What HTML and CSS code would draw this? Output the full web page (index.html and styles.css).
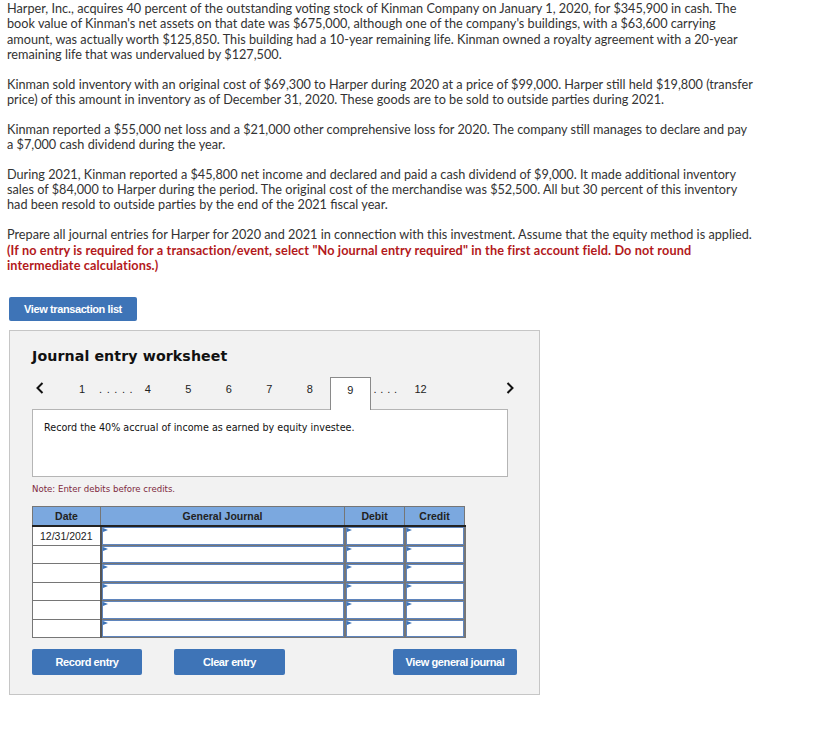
FILE: index.html
```html
<!DOCTYPE html>
<html>
<head>
<meta charset="utf-8">
<link rel="stylesheet" href="styles.css">
</head>
<body>
<div class="question">
  <p>Harper, Inc., acquires 40 percent of the outstanding voting stock of Kinman Company on January 1, 2020, for $345,900 in cash. The book value of Kinman's net assets on that date was $675,000, although one of the company's buildings, with a $63,600 carrying amount, was actually worth $125,850. This building had a 10-year remaining life. Kinman owned a royalty agreement with a 20-year remaining life that was undervalued by $127,500.</p>
  <p>Kinman sold inventory with an original cost of $69,300 to Harper during 2020 at a price of $99,000. Harper still held $19,800 (transfer price) of this amount in inventory as of December 31, 2020. These goods are to be sold to outside parties during 2021.</p>
  <p>Kinman reported a $55,000 net loss and a $21,000 other comprehensive loss for 2020. The company still manages to declare and pay a $7,000 cash dividend during the year.</p>
  <p>During 2021, Kinman reported a $45,800 net income and declared and paid a cash dividend of $9,000. It made additional inventory sales of $84,000 to Harper during the period. The original cost of the merchandise was $52,500. All but 30 percent of this inventory had been resold to outside parties by the end of the 2021 fiscal year.</p>
  <p>Prepare all journal entries for Harper for 2020 and 2021 in connection with this investment. Assume that the equity method is applied.<br><strong class="warn">(If no entry is required for a transaction/event, select "No journal entry required" in the first account field. Do not round intermediate calculations.)</strong></p>
</div>

<button class="btn btn-list">View transaction list</button>

<div class="panel">
  <h2 class="title">Journal entry worksheet</h2>
  <div class="pager">
    <span class="arrow">
      <svg width="8" height="12" viewBox="0 0 8 12"><path d="M6.5 1 L1.5 6 L6.5 11" fill="none" stroke="#111" stroke-width="2"/></svg>
    </span>
    <span class="pg p1">1</span>
    <span class="dots d5">.....</span>
    <span class="pg">4</span>
    <span class="pg">5</span>
    <span class="pg">6</span>
    <span class="pg">7</span>
    <span class="pg">8</span>
    <span class="pg current">9</span>
    <span class="dots d4">....</span>
    <span class="pg p12">12</span>
    <span class="arrow right">
      <svg width="8" height="12" viewBox="0 0 8 12"><path d="M1.5 1 L6.5 6 L1.5 11" fill="none" stroke="#111" stroke-width="2"/></svg>
    </span>
  </div>
  <div class="desc">Record the 40% accrual of income as earned by equity investee.</div>
  <div class="note">Note: Enter debits before credits.</div>

  <table class="journal">
    <thead>
      <tr><th class="c-date">Date</th><th class="c-acct">General Journal</th><th class="c-amt">Debit</th><th class="c-amt">Credit</th></tr>
    </thead>
    <tbody>
      <tr><td class="date">12/31/2021</td><td><div class="inp"></div></td><td><div class="inp"></div></td><td><div class="inp"></div></td></tr>
      <tr><td class="date"></td><td><div class="inp"></div></td><td><div class="inp"></div></td><td><div class="inp"></div></td></tr>
      <tr><td class="date"></td><td><div class="inp"></div></td><td><div class="inp"></div></td><td><div class="inp"></div></td></tr>
      <tr><td class="date"></td><td><div class="inp"></div></td><td><div class="inp"></div></td><td><div class="inp"></div></td></tr>
      <tr><td class="date"></td><td><div class="inp"></div></td><td><div class="inp"></div></td><td><div class="inp"></div></td></tr>
      <tr><td class="date"></td><td><div class="inp"></div></td><td><div class="inp"></div></td><td><div class="inp"></div></td></tr>
    </tbody>
  </table>

  <div class="actions">
    <button class="btn btn-record">Record entry</button>
    <button class="btn btn-clear">Clear entry</button>
    <button class="btn btn-view">View general journal</button>
  </div>
</div>
</body>
</html>
```

FILE: styles.css
```css
html, body {
  margin: 0;
  padding: 0;
  background: #fff;
}

body {
  width: 822px;
}

.question {
  padding: 1px 0 0 7px;
  width: 749px;
  font-family: "Lato", "Liberation Sans", sans-serif;
  font-size: 12.7px;
  line-height: 15.3px;
  color: #333;
}

.question p {
  margin: 0 0 14.5px 0;
}

.warn {
  color: #b3191b;
  font-weight: 700;
  letter-spacing: 0.12px;
}

.btn {
  display: block;
  border: 0;
  border-radius: 2px;
  background: #3e74b7;
  color: #fff;
  font-family: "Liberation Sans", Arial, sans-serif;
  font-size: 11px;
  font-weight: 700;
  letter-spacing: -0.4px;
  padding: 0;
  cursor: pointer;
}

.btn-list {
  margin: 24px 0 0 9px;
  width: 128px;
  height: 24px;
}

.panel {
  margin: 9px 0 0 9px;
  width: 531px;
  height: 365px;
  background: #f2f2f2;
  border: 1px solid #c6c6c6;
  box-sizing: border-box;
  padding: 15px 0 0 22px;
}

.title {
  margin: 0;
  font-family: "DejaVu Sans", Verdana, sans-serif;
  font-size: 14.2px;
  font-weight: 700;
  color: #111;
  letter-spacing: 0.1px;
  height: 21px;
  line-height: 21px;
}

.pager {
  margin-top: 10px;
  display: flex;
  align-items: flex-end;
  height: 32px;
  width: 476px;
  font-family: "Liberation Sans", Arial, sans-serif;
  font-size: 11px;
  color: #222;
}

.pager > span {
  display: flex;
  align-items: center;
  justify-content: center;
  height: 32px;
}

.arrow {
  width: 14px;
  justify-content: flex-start !important;
  padding-left: 4px;
  padding-bottom: 10px;
  box-sizing: border-box;
}

.arrow.right {
  margin-left: auto;
  justify-content: flex-end !important;
  padding-left: 0;
  width: 12px;
  margin-right: -6px;
}

.pg {
  width: 40.5px;
  padding-bottom: 8px;
  box-sizing: border-box;
}

.p1 {
  width: 14px;
  margin-left: 29px;
}

.dots {
  padding-bottom: 8px;
  box-sizing: border-box;
  justify-content: flex-start !important;
}

.d5 {
  width: 44px;
  padding-left: 10px;
  letter-spacing: 4.6px;
  margin-right: -5.5px;
}

.d4 {
  width: 43px;
  padding-left: 3px;
  letter-spacing: 3.8px;
}

.current {
  background: #fff;
  border: 1px solid #8a8a8a;
  border-bottom: 0;
  height: 33px !important;
  margin-bottom: -1px;
  position: relative;
  z-index: 1;
}

.p12 {
  width: 14px;
}

.desc {
  width: 476px;
  height: 68px;
  box-sizing: border-box;
  background: #fff;
  border: 1px solid #b5b5b5;
  padding: 12px 11px;
  font-family: "DejaVu Sans", Verdana, sans-serif;
  font-size: 9.6px;
  color: #111;
}

.note {
  margin-top: 6px;
  font-family: "DejaVu Sans", Verdana, sans-serif;
  font-size: 8.6px;
  color: #7e2a40;
  height: 12px;
  line-height: 12px;
}

.journal {
  margin-top: 11px;
  border-collapse: collapse;
  font-family: "Liberation Sans", Arial, sans-serif;
  font-size: 10.5px;
  color: #222;
  table-layout: fixed;
  width: 432px;
}

.journal th {
  background: #7ba8df;
  height: 18px;
  padding: 0;
  font-weight: 700;
  border: 1px solid #767676;
  border-left-color: #222;
  border-bottom: 2px solid #222;
}

.journal th:first-child {
  border-left-color: #767676;
}

.c-date { width: 67px; }
.c-acct { width: 243px; }
.c-amt { width: 59px; }

.journal td {
  height: 17.5px;
  padding: 0;
  border: 1px solid #767676;
  background: #fff;
  vertical-align: top;
}

.journal td.date {
  text-align: center;
  vertical-align: middle;
  border-right: 2px solid #555;
}

.journal td:not(.date) {
  border-left: 2px solid #767676;
  border-right: 2px solid #767676;
}

.inp {
  position: relative;
  height: 15.5px;
  border: 1px solid #5f85bd;
  background: #fff;
}

.inp::before {
  content: "";
  position: absolute;
  left: 0;
  top: 0;
  width: 0;
  height: 0;
  border-top: 2.5px solid transparent;
  border-bottom: 2.5px solid transparent;
  border-left: 5px solid #3e74b7;
}

.actions {
  margin-top: 11px;
  display: flex;
  width: 485px;
  height: 26px;
}

.btn-record {
  width: 110px;
  height: 26px;
}

.btn-clear {
  width: 111px;
  height: 26px;
  margin-left: 32px;
}

.btn-view {
  width: 124px;
  height: 26px;
  margin-left: auto;
}
```
